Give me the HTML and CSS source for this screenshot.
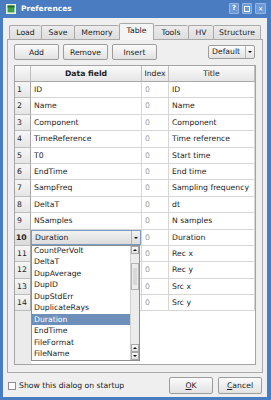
FILE: index.html
```html
<!doctype html>
<html>

<head>
    <meta charset="UTF-8" />
    <meta name="viewport" content="width=device-width, initial-scale=1.0" />
    <link rel="stylesheet" href="styles.css">
</head>

<body>
    <div class="window">
        <div class="titlebar">
            <svg class="titlebar__icon" width="10" height="10" viewBox="0 0 10 10">
                <rect x="0.5" y="0.5" width="9" height="9" fill="#fff" stroke="#e8f0e0" />
                <rect x="1.5" y="1.5" width="7" height="7" fill="#3aa048" />
                <rect x="1.5" y="1.5" width="7" height="2" fill="#1f6b2a" />
            </svg>
            <span class="titlebar__title">Preferences</span>
            <div class="titlebar__buttons">
                <span class="tb-btn">?</span>
                <span class="tb-btn"><span class="tb-btn__max"></span></span>
                <span class="tb-btn tb-btn--close">&#x2715;</span>
            </div>
        </div>

        <div class="client">
            <div class="tabs">
                <div class="tab tab--load">Load</div>
                <div class="tab tab--save">Save</div>
                <div class="tab tab--memory">Memory</div>
                <div class="tab tab--table tab--active">Table</div>
                <div class="tab tab--tools">Tools</div>
                <div class="tab tab--hv">HV</div>
                <div class="tab tab--structure">Structure</div>
            </div>

            <div class="panel">
                <div class="toolbar">
                    <button class="btn btn--tool">Add</button>
                    <button class="btn btn--tool">Remove</button>
                    <button class="btn btn--tool">Insert</button>
                    <div class="combo combo--default">
                        <span class="combo__text">Default</span>
                        <span class="combo__arrow"></span>
                    </div>
                </div>

                <div class="table">
                    <div class="grid">
                        <div class="hcell corner"></div>
                        <div class="hcell hcell--bold">Data field</div>
                        <div class="hcell">Index</div>
                        <div class="hcell">Title</div>

                        <div class="vcell">1</div><div class="cell">ID</div><div class="cell cell--index">0</div><div class="cell">ID</div>
                        <div class="vcell">2</div><div class="cell">Name</div><div class="cell cell--index">0</div><div class="cell">Name</div>
                        <div class="vcell">3</div><div class="cell">Component</div><div class="cell cell--index">0</div><div class="cell">Component</div>
                        <div class="vcell">4</div><div class="cell">TimeReference</div><div class="cell cell--index">0</div><div class="cell">Time reference</div>
                        <div class="vcell">5</div><div class="cell">T0</div><div class="cell cell--index">0</div><div class="cell">Start time</div>
                        <div class="vcell">6</div><div class="cell">EndTime</div><div class="cell cell--index">0</div><div class="cell">End time</div>
                        <div class="vcell">7</div><div class="cell">SampFreq</div><div class="cell cell--index">0</div><div class="cell">Sampling frequency</div>
                        <div class="vcell">8</div><div class="cell">DeltaT</div><div class="cell cell--index">0</div><div class="cell">dt</div>
                        <div class="vcell">9</div><div class="cell">NSamples</div><div class="cell cell--index">0</div><div class="cell">N samples</div>
                        <div class="vcell vcell--current">10</div>
                        <div class="cell cell--editor">
                            <div class="combo combo--editor">
                                <span class="combo__text">Duration</span>
                                <span class="combo__arrow"></span>
                            </div>
                        </div>
                        <div class="cell cell--index">0</div><div class="cell">Duration</div>
                        <div class="vcell">11</div><div class="cell"></div><div class="cell cell--index">0</div><div class="cell">Rec x</div>
                        <div class="vcell">12</div><div class="cell"></div><div class="cell cell--index">0</div><div class="cell">Rec y</div>
                        <div class="vcell">13</div><div class="cell"></div><div class="cell cell--index">0</div><div class="cell">Src x</div>
                        <div class="vcell">14</div><div class="cell"></div><div class="cell cell--index">0</div><div class="cell">Src y</div>
                    </div>

                    <!-- open combo list of row 10 -->
                    <div class="popup">
                        <ul class="popup__list">
                            <li>CountPerVolt</li>
                            <li>DeltaT</li>
                            <li>DupAverage</li>
                            <li>DupID</li>
                            <li>DupStdErr</li>
                            <li>DuplicateRays</li>
                            <li class="is-selected">Duration</li>
                            <li>EndTime</li>
                            <li>FileFormat</li>
                            <li>FileName</li>
                        </ul>
                        <div class="scrollbar">
                            <span class="sb-btn sb-btn--up"></span>
                            <div class="sb-track"><span class="sb-thumb"></span></div>
                            <span class="sb-btn sb-btn--up"></span>
                            <span class="sb-btn sb-btn--down"></span>
                        </div>
                    </div>
                </div>
            </div>

            <div class="footer">
                <label class="check">
                    <span class="check__box"></span>
                    Show this dialog on startup
                </label>
                <div class="footer__buttons">
                    <button class="btn btn--dialog"><u>O</u>K</button>
                    <button class="btn btn--dialog"><u>C</u>ancel</button>
                </div>
            </div>
        </div>
    </div>
</body>

</html>
```

FILE: styles.css
```css
* {
    margin: 0;
    padding: 0;
    box-sizing: border-box;
}

body {
    font-family: "DejaVu Sans", sans-serif;
    font-size: 7.7px;
    color: #1c1c1c;
    background-color: #fff;
}

button {
    font: inherit;
    color: inherit;
}

.window {
    width: 271px;
    height: 400px;
    display: flex;
    flex-direction: column;
    background-color: #4a7cc1;
    padding: 0 4px 3px 3px;
}

/* title bar */
.titlebar {
    height: 18px;
    display: flex;
    align-items: center;
    padding: 0 1px 1px 3px;
    color: #fff;
}

.titlebar__icon {
    display: block;
}

.titlebar__title {
    margin-left: 5px;
    font-weight: bold;
    font-size: 7.5px;
}

.titlebar__buttons {
    margin-left: auto;
    display: flex;
    gap: 3px;
}

.tb-btn {
    width: 10px;
    height: 11px;
    border: 1px solid #95b6e2;
    border-radius: 1px;
    background-color: #6c9ad6;
    font-size: 7px;
    font-weight: bold;
    line-height: 9px;
    text-align: center;
    display: flex;
    align-items: center;
    justify-content: center;
}

.tb-btn--close {
    width: 11px;
    font-size: 6px;
}

.tb-btn__max {
    width: 6px;
    height: 6px;
    border: 1px solid #fff;
}

/* client area */
.client {
    flex: 1;
    display: flex;
    flex-direction: column;
    background-color: #efefef;
    padding: 0 4px;
}

.tabs {
    display: flex;
    align-items: flex-end;
    margin-left: 2px;
    height: 21px;
    position: relative;
    z-index: 1;
}

.tab {
    height: 14px;
    border: 1px solid #a9a9a9;
    border-bottom: none;
    border-right: none;
    border-radius: 2px 2px 0 0;
    background: linear-gradient(#ececec, #dedede);
    text-align: center;
    line-height: 13px;
}

.tab--structure {
    border-right: 1px solid #a9a9a9;
}

.tab--active {
    height: 17px;
    margin-bottom: -1px;
    background: #f4f4f4;
    border-right: 1px solid #a9a9a9;
    line-height: 14px;
}

.tab--active + .tab {
    border-left: none;
}

.tab--load { width: 32px; }
.tab--save { width: 33px; }
.tab--memory { width: 45px; }
.tab--table { width: 35px; }
.tab--tools { width: 34px; }
.tab--hv { width: 25px; }
.tab--structure { width: 48px; }

.panel {
    height: 334px;
    display: flex;
    flex-direction: column;
    border: 1px solid #a9a9a9;
    padding: 4px 6px 7px 6px;
}

.toolbar {
    display: flex;
    align-items: center;
    height: 16px;
    gap: 4px;
}

.btn {
    border: 1px solid #9d9d9d;
    border-radius: 2px;
    background: linear-gradient(#fbfbfb, #e2e2e2);
    text-align: center;
}

.btn--tool {
    width: 45px;
    height: 16px;
}

.combo {
    display: flex;
    align-items: stretch;
    border: 1px solid #9d9d9d;
    border-radius: 2px;
    background: linear-gradient(#fbfbfb, #e2e2e2);
}

.combo__text {
    flex: 1;
    padding-left: 3px;
    line-height: 12px;
}

.combo__arrow {
    width: 9px;
    border-left: 1px solid #b4b4b4;
    position: relative;
}

.combo__arrow::after {
    content: "";
    position: absolute;
    left: 2px;
    top: 5px;
    border-left: 2px solid transparent;
    border-right: 2px solid transparent;
    border-top: 2px solid #111;
}

.combo--default {
    width: 47px;
    height: 14px;
    margin-left: auto;
    margin-right: 1px;
}

/* table */
.table {
    position: relative;
    margin-top: 5px;
    width: 242px;
    height: 300px;
    border: 1px solid #a4a4a4;
    background: linear-gradient(to right, #ebebeb 16px, #fff 16px);
}

.grid {
    display: grid;
    grid-template-columns: 16px 111px 27px 86px;
    grid-template-rows: 16px;
    grid-auto-rows: 16.4px;
}

.hcell {
    border-right: 1px solid #bdbdbd;
    border-bottom: 1px solid #a8a8a8;
    background: linear-gradient(#fafafa, #e6e6e6);
    text-align: center;
    line-height: 15px;
}

.hcell--bold {
    font-weight: bold;
}

.vcell {
    border-right: 1px solid #a8a8a8;
    border-bottom: 1px solid #bdbdbd;
    background: linear-gradient(#f6f6f6, #e6e6e6);
    padding-left: 2px;
    line-height: 15px;
}

.vcell--current {
    font-weight: bold;
    padding-left: 1px;
    background: linear-gradient(#eaeaea, #dadada);
}

.cell {
    border-right: 1px solid #d6d6d6;
    border-bottom: 1px solid #d6d6d6;
    padding-left: 3px;
    line-height: 15px;
    white-space: nowrap;
    overflow: hidden;
}

.cell--index {
    color: #9c9c9c;
}

.cell--editor {
    padding: 0;
}

.combo--editor {
    height: 100%;
    border-color: #7b9bc6;
    border-radius: 0;
    background: linear-gradient(#f2f2f2, #dcdcdc);
}

.combo--editor .combo__text {
    line-height: 14px;
}

.combo--editor .combo__arrow::after {
    top: 6px;
}

.popup {
    position: absolute;
    left: 16px;
    top: 179px;
    width: 109px;
    height: 116px;
    display: flex;
    border: 1px solid #8e8e8e;
    background-color: #fff;
    overflow: hidden;
    z-index: 2;
}

.popup__list {
    flex: 1;
    list-style: none;
    margin-top: -1px;
}

.popup__list li {
    height: 11.44px;
    line-height: 11.44px;
    padding-left: 2px;
}

.popup__list .is-selected {
    background-color: #6e8fba;
    color: #fff;
}

.scrollbar {
    width: 9px;
    display: flex;
    flex-direction: column;
    background-color: #ececec;
    border-left: 1px solid #d0d0d0;
}

.sb-btn {
    height: 8px;
    border: 1px solid #a8a8a8;
    background: linear-gradient(#fafafa, #e0e0e0);
    position: relative;
}

.sb-btn::after {
    content: "";
    position: absolute;
    left: 1px;
    border-left: 2.5px solid transparent;
    border-right: 2.5px solid transparent;
}

.sb-btn--up::after {
    top: 2px;
    border-bottom: 2px solid #111;
}

.sb-btn--down::after {
    top: 2px;
    border-top: 2px solid #111;
}

.sb-track {
    flex: 1;
    padding-top: 9px;
}

.sb-thumb {
    display: block;
    height: 27px;
    border: 1px solid #b4b4b4;
    background: radial-gradient(#b8b8b8 0.6px, transparent 0.8px) 0 0 / 2px 2px, #f4f4f4;
    background-clip: content-box;
    padding: 4px 1px;
}

/* footer */
.footer {
    flex: 1;
    display: flex;
    align-items: center;
    padding: 1px 1px 0 1px;
}

.check {
    display: flex;
    align-items: center;
    gap: 3px;
}

.check__box {
    width: 8px;
    height: 8px;
    border: 1px solid #8e8e8e;
    background-color: #fff;
}

.footer__buttons {
    margin-left: auto;
    display: flex;
    gap: 5px;
}

.btn--dialog {
    width: 44px;
    height: 17px;
}
```
